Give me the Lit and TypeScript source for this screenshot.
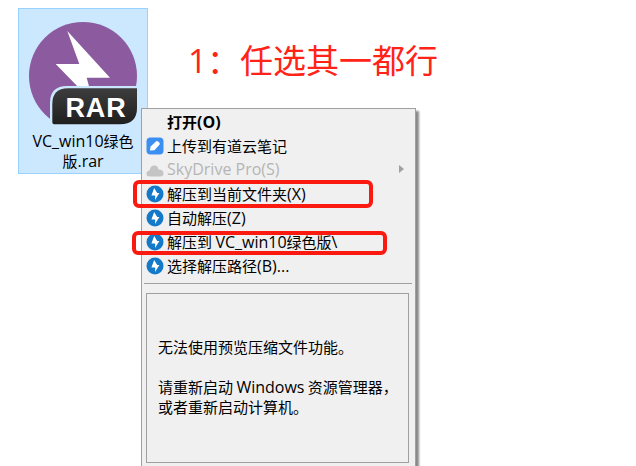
import { LitElement, html, css } from "lit";
import { customElement } from "lit/decorators.js";

const bolt = html`<svg class="ic" viewBox="0 0 18 18"><circle cx="9" cy="9" r="8.5" fill="#1479c9"/><path d="M8.2 3 L11.2 8 L13.4 8 L9 15 L9.2 10.4 L5.4 10.4 Z" fill="#fff"/></svg>`;
const note = html`<svg class="ic" viewBox="0 0 18 18"><rect x="0.5" y="0.5" width="17" height="17" rx="4" fill="#3b8ff3"/><path d="M4 13.5 L4.6 9.4 L10 4.4 Q11 3.6 12 4.4 L13.4 5.8 Q14.2 6.8 13.4 7.8 L8.4 13.2 Z" fill="#fff"/></svg>`;
const cloud = html`<svg class="ic" viewBox="0 0 18 18"><path d="M4 15.5 Q0 15.5 0.5 12 Q1 9.5 3.5 9.5 Q4.5 4 9 4.5 Q12 5 12.5 8.5 Q17.5 8.5 17.5 12.5 Q17.5 15.5 14 15.5 Z" fill="#c4c4c4"/></svg>`;

@customElement("app-root")
export class AppRoot extends LitElement {
  static styles = css`
    :host {
      display: block;
      position: relative;
      width: 636px;
      height: 466px;
      overflow: hidden;
      background: #fff;
      font-family: "Noto Sans CJK SC", sans-serif;
      font-size: 15px;
      color: #000;
    }
    .l { font-family: "Open Sans", sans-serif; font-size: 16px; line-height: 1; }
    .tile {
      position: absolute;
      left: 18px;
      top: 8px;
      width: 130px;
      height: 166px;
      box-sizing: border-box;
      background: #cce8ff;
      border: 1px solid #99d1ff;
      display: flex;
      flex-direction: column;
      align-items: center;
    }
    .logo { display: block; width: 128px; height: 120px; flex: none; }
    .name { text-align: center; line-height: 20px; margin-top: 2px; width: 128px; white-space: nowrap; }
    .title {
      position: absolute;
      left: 188px;
      top: 36px;
      font-size: 33px;
      line-height: 46px;
      color: #ff2318;
      white-space: nowrap;
      font-family: "Open Sans", "Noto Sans CJK SC", sans-serif;
    }
    .title .c { font-family: "Noto Sans CJK SC", sans-serif; }
    .menu {
      position: absolute;
      left: 141px;
      top: 108px;
      width: 275px;
      height: 370px;
      box-sizing: border-box;
      background: #f0f0f0;
      border: 1px solid #a0a0a0;
      box-shadow: 3px 3px 2px #8a8a8a;
      padding: 1px 5px 0 4px;
      display: flex;
      flex-direction: column;
    }
    .row {
      height: 24px;
      flex: none;
      display: flex;
      align-items: center;
      gap: 3px;
      white-space: nowrap;
      position: relative;
    }
    .row > span { margin-bottom: 2px; }
    .ic { width: 18px; height: 18px; flex: none; display: block; }
    .slot { width: 18px; flex: none; }
    .bold { font-weight: 700; }
    .off { color: #b5b5b5; }
    .arrow {
      position: absolute;
      right: 6px;
      top: 7px;
      width: 0;
      height: 0;
      border-style: solid;
      border-width: 4.5px 0 4.5px 5px;
      border-color: transparent transparent transparent #a0a0a0;
    }
    .sep { height: 1px; background: #a0a0a0; margin: 5px -2px 0 -2px; flex: none; }
    .preview {
      margin: 9px 1px 0 0;
      height: 170px;
      box-sizing: border-box;
      flex: none;
      border: 1px solid #a0a0a0;
      padding: 43px 0 0 11px;
      line-height: 20px;
      white-space: nowrap;
    }
    .gap { height: 20px; }
    .mark {
      position: absolute;
      box-sizing: border-box;
      border: 4px solid #fa1a10;
      border-radius: 6px;
    }
    .m1 { left: 133px; top: 180px; width: 240px; height: 28px; }
    .m2 { left: 132px; top: 231px; width: 255px; height: 24px; }
  `;

  render() {
    return html`
      <div class="tile">
        <svg class="logo" viewBox="19 9 128 120">
          <defs>
            <linearGradient id="bd" x1="0" y1="0" x2="0" y2="1">
              <stop offset="0" stop-color="#3d3d3d" />
              <stop offset="1" stop-color="#1f1f1f" />
            </linearGradient>
          </defs>
          <circle cx="83" cy="76" r="54" fill="#8b5a9f"/>
          <path d="M67.3 31 L110 77.7 L86.7 77.7 L90 90 L81 90 L55.7 64 L79.3 64 Z" fill="#fff"/>
          <path d="M50 132 L50 103 Q50 86 67 86 L140 86 L140 132 Z" fill="#cce8ff"/>
          <path d="M137 88.3 L68 88.3 Q52.3 88.3 52.3 104 L52.3 122 Q52.3 124.3 55 124.3 L120 124.3 Q137 124.3 137 108 Z" fill="url(#bd)"/>
          <text x="96" y="116.7" text-anchor="middle" font-family="'Liberation Sans', sans-serif" font-weight="700" font-size="27" letter-spacing="0.8" fill="#fff">RAR</text>
        </svg>
        <div class="name"><span class="l">VC_win10</span>绿色<br />版<span class="l">.rar</span></div>
      </div>
      <div class="title">1<span class="c">：任选其一都行</span></div>
      <div class="menu">
        <div class="row"><span class="slot"></span><span class="bold">打开<span class="l">(O)</span></span></div>
        <div class="row">${note}<span>上传到有道云笔记</span></div>
        <div class="row off">${cloud}<span class="l">SkyDrive Pro(S)</span><i class="arrow"></i></div>
        <div class="row">${bolt}<span>解压到当前文件夹<span class="l">(X)</span></span></div>
        <div class="row">${bolt}<span>自动解压<span class="l">(Z)</span></span></div>
        <div class="row">${bolt}<span>解压到 <span class="l">VC_win10</span>绿色版<span class="l">\\</span></span></div>
        <div class="row">${bolt}<span>选择解压路径<span class="l">(B)...</span></span></div>
        <div class="sep"></div>
        <div class="preview">
          <div>无法使用预览压缩文件功能。</div>
          <div class="gap"></div>
          <div>请重新启动 <span class="l">Windows</span> 资源管理器，</div>
          <div>或者重新启动计算机。</div>
        </div>
      </div>
      <div class="mark m1"></div>
      <div class="mark m2"></div>
    `;
  }
}
